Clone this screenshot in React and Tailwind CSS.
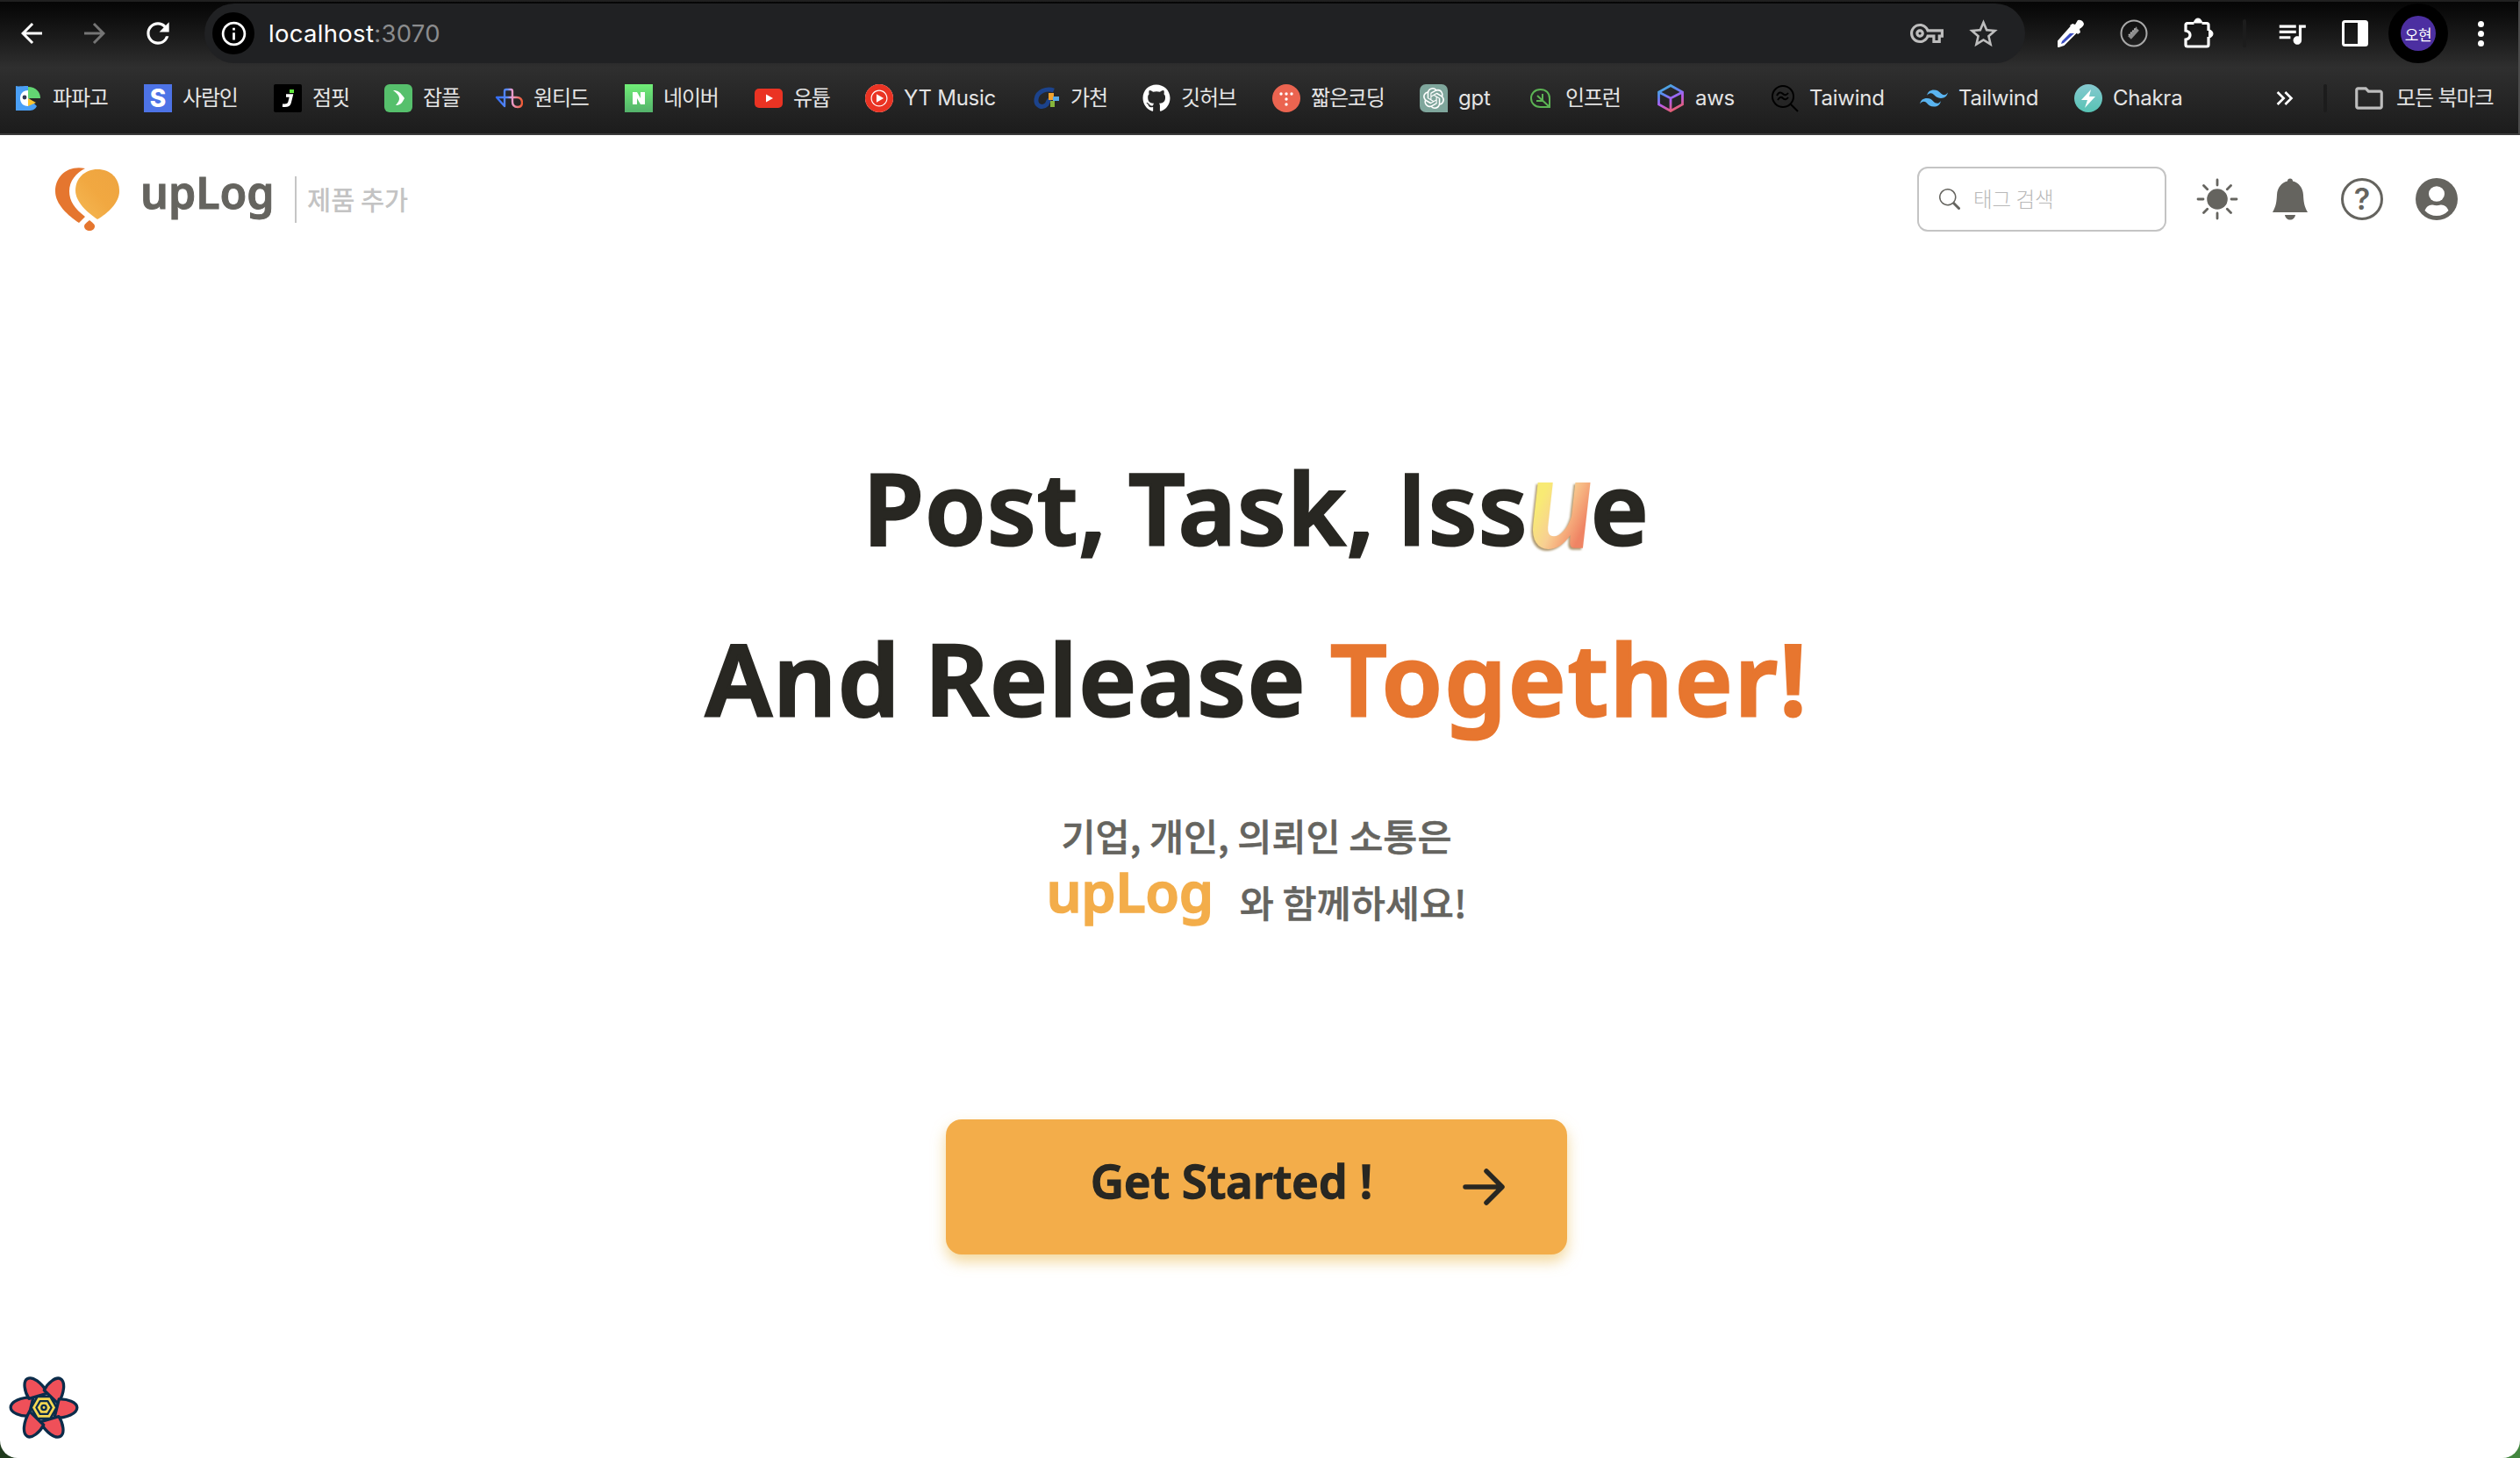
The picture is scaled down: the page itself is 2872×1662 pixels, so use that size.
import { FaGithub } from 'react-icons/fa';
import { SiOpenai, SiTailwindcss, SiYoutubemusic } from 'react-icons/si';
import { BsSearch } from 'react-icons/bs';
import {
  MdArrowBack,
  MdArrowForward,
  MdInfoOutline,
  MdKeyboardDoubleArrowRight,
  MdOutlineFolder,
  MdOutlineVpnKey,
  MdQueueMusic,
  MdRefresh,
  MdStarOutline,
} from 'react-icons/md';

function PapagoIcon() {
  return (
    <svg viewBox="0 0 32 32" className="size-8">
      <path d="M2 2c3 1 6 0 14 0v13l10 10c-2 4-5 5-9 5H2V10z" fill="#4a9ff5" />
      <path d="M16 3c9 0 14 6 14 13H16z" fill="#63d673" />
      <path d="M16 7c-6 0-9 4-9 9s3 9 9 9z" fill="#fff" />
      <path d="M16 16l9 5-9 4z" fill="#fbc531" />
      <circle cx="12" cy="15" r="2.4" fill="#303a52" />
    </svg>
  );
}

function SaraminIcon() {
  return (
    <span className="flex size-8 items-center justify-center bg-[#4d73e6] font-['Inter'] text-[28px] leading-none font-extrabold text-white">
      S
    </span>
  );
}

function JumpitIcon() {
  return (
    <svg viewBox="0 0 32 32" className="size-8">
      <rect width="32" height="32" rx="2" fill="#000" />
      <rect x="18" y="6" width="5" height="4" fill="#5fe63c" />
      <path d="M14 13h6l-2 8q-1 4-8 3" fill="none" stroke="#fff" strokeWidth="3.6" />
    </svg>
  );
}

function JobpleIcon() {
  return (
    <svg viewBox="0 0 32 32" className="size-8">
      <rect width="32" height="32" rx="6" fill="#56c06c" />
      <path d="M10 7c6 0 8 2 13 9-3 6-5 8-10 8 3-4 4-5 4-8s-3-6-7-9z" fill="#fff" />
    </svg>
  );
}

function WantedIcon() {
  return (
    <svg viewBox="0 0 32 32" className="size-8" fill="none" strokeWidth="2.4">
      <defs>
        <linearGradient id="wanted" x1="0" y1="0" x2="32" y2="0" gradientUnits="userSpaceOnUse">
          <stop offset="0" stopColor="#2c66f5" />
          <stop offset=".45" stopColor="#5b8cf7" />
          <stop offset=".6" stopColor="#e9a0d4" />
          <stop offset="1" stopColor="#f0562a" />
        </linearGradient>
      </defs>
      <path
        d="M11 15V8q0-2 2-2h5q2 0 2 2v12q0 6 6 6 5 0 5-5 0-6-6-6H2l9 10V15"
        stroke="url(#wanted)"
        strokeLinejoin="round"
      />
    </svg>
  );
}

function NaverIcon() {
  return (
    <svg viewBox="0 0 32 32" className="size-8">
      <defs>
        <linearGradient id="naver" x1="0" y1="0" x2="0" y2="1">
          <stop offset="0" stopColor="#70ee77" />
          <stop offset="1" stopColor="#54b26b" />
        </linearGradient>
      </defs>
      <rect width="32" height="32" fill="url(#naver)" />
      <path d="M9 9h5l4 7V9h5v14h-5l-4-7v7H9z" fill="#fff" />
    </svg>
  );
}

function YoutubeIcon() {
  return (
    <svg viewBox="0 0 32 32" className="size-8">
      <rect y="5" width="32" height="22" rx="5" fill="#ea3323" />
      <path d="M13 11.5v9l8-4.500z" fill="#fff" />
    </svg>
  );
}

function YtMusicIcon() {
  return (
    <span className="flex size-8 items-center justify-center rounded-full bg-white">
      <SiYoutubemusic className="size-8 text-[#ea3323]" />
    </span>
  );
}

function GachonIcon() {
  return (
    <svg viewBox="0 0 32 32" className="size-8">
      <path
        d="M25 7C17 4 6 8 5 17c-1 8 7 11 12 6l3-6"
        fill="none"
        stroke="#1c438c"
        strokeWidth="5"
      />
      <rect x="19" y="10" width="6" height="8" fill="#f0a32e" />
      <rect x="24" y="14" width="7" height="5" fill="#55a8e8" />
      <rect x="21" y="19" width="5" height="7" fill="#86b53c" />
    </svg>
  );
}

function ShortCodingIcon() {
  return (
    <svg viewBox="0 0 32 32" className="size-8" fill="#fff">
      <circle cx="16" cy="16" r="16" fill="#eb6450" />
      <circle cx="10" cy="11" r="1.700" />
      <circle cx="16" cy="11" r="1.700" />
      <circle cx="22" cy="11" r="1.700" />
      <circle cx="16" cy="17" r="1.700" />
      <circle cx="16" cy="23" r="1.700" />
    </svg>
  );
}

function GptIcon() {
  return (
    <span className="flex size-8 items-center justify-center rounded-[7px] rounded-br-none bg-[#7fa69c] text-white">
      <SiOpenai className="size-6" />
    </span>
  );
}

function InflearnIcon() {
  return (
    <svg viewBox="0 0 32 32" className="size-8" fill="none" stroke="#5cb354" strokeWidth="2">
      <path d="M15.500 6C22 6 26 10 26 16v10H15.500C9 26 5 21.500 5 16S9 6 15.500 6z" />
      <path d="M26 26L12 13M18 18v-7M18 19h-7" />
    </svg>
  );
}

function AwsIcon() {
  return (
    <svg viewBox="0 0 32 32" className="size-8" fill="none" strokeWidth="2.800">
      <defs>
        <linearGradient id="aws" x1="6" y1="0" x2="20" y2="32" gradientUnits="userSpaceOnUse">
          <stop offset="0" stopColor="#3fb8d4" />
          <stop offset=".35" stopColor="#5f86f2" />
          <stop offset=".6" stopColor="#b55cf0" />
          <stop offset="1" stopColor="#ef5f5c" />
        </linearGradient>
      </defs>
      <path
        d="M16 1.500L29.500 9v14L16 30.500 2.500 23V9zM2.500 9L16 16l13.500-7M16 16v14"
        stroke="url(#aws)"
      />
    </svg>
  );
}

function TaiwindSearchIcon() {
  return (
    <svg viewBox="0 0 32 32" className="size-8" fill="none" stroke="#000" strokeWidth="2">
      <circle cx="14" cy="14" r="12" />
      <path d="M22.500 22.500L31 31M7 13q3-6 7-2 3 3 6-1M8 18q3-5 6-2 3 3 6-1" />
    </svg>
  );
}

function ChakraIcon() {
  return (
    <svg viewBox="0 0 32 32" className="size-8">
      <defs>
        <linearGradient id="chakra" x1="0" y1="0" x2="0" y2="1">
          <stop offset="0" stopColor="#86c9d0" />
          <stop offset="1" stopColor="#57c3b4" />
        </linearGradient>
      </defs>
      <circle cx="16" cy="16" r="16" fill="url(#chakra)" />
      <path d="M19 6L8 18h7l-3 9 12-13h-7z" fill="#fff" />
    </svg>
  );
}

const BOOKMARKS = [
  { label: '파파고', Icon: PapagoIcon, slot: 'w-[148px]' },
  { label: '사람인', Icon: SaraminIcon, slot: 'w-[148px]' },
  { label: '점핏', Icon: JumpitIcon, slot: 'w-[126px]' },
  { label: '잡플', Icon: JobpleIcon, slot: 'w-[126px]' },
  { label: '원티드', Icon: WantedIcon, slot: 'w-[148px]' },
  { label: '네이버', Icon: NaverIcon, slot: 'w-[148px]' },
  { label: '유튭', Icon: YoutubeIcon, slot: 'w-[126px]' },
  { label: 'YT Music', Icon: YtMusicIcon, slot: 'w-[190px]', latin: true },
  { label: '가천', Icon: GachonIcon, slot: 'w-[126px]' },
  { label: '깃허브', Icon: () => <FaGithub className="size-8 text-white" />, slot: 'w-[148px]' },
  { label: '짧은코딩', Icon: ShortCodingIcon, slot: 'w-[168px]' },
  { label: 'gpt', Icon: GptIcon, slot: 'w-[122px]', latin: true },
  { label: '인프런', Icon: InflearnIcon, slot: 'w-[148px]' },
  { label: 'aws', Icon: AwsIcon, slot: 'w-[130px]', latin: true },
  { label: 'Taiwind', Icon: TaiwindSearchIcon, slot: 'w-[170px]', latin: true },
  {
    label: 'Tailwind',
    Icon: () => <SiTailwindcss className="size-8 text-[#5ab4f0]" />,
    slot: 'w-[176px]',
    latin: true,
  },
  { label: 'Chakra', Icon: ChakraIcon, slot: 'w-[140px]', latin: true },
];

function EyedropperIcon() {
  return (
    <svg viewBox="0 0 32 32" className="size-8">
      <path d="M2 25L17 8l6 6L8 29l-6 2z" fill="#fff" stroke="#fff" strokeWidth="2" strokeLinejoin="round" />
      <path d="M6 25l9-9h5L8 27l-3 1z" fill="#3a4cc0" />
      <path d="M15 7l3-2 3 1 3-5q5-1 7 4 0 3-5 6l1 4-3 2z" fill="#fff" />
    </svg>
  );
}

function PencilBadgeIcon() {
  return (
    <svg viewBox="0 0 32 32" className="size-8" fill="none">
      <circle cx="16" cy="16" r="14.500" stroke="#a9a9a9" strokeWidth="2" />
      <path d="M11 21l9-10" stroke="#8d8d8d" strokeWidth="5" />
      <path d="M10 18l9-9" stroke="#bdbdbd" strokeWidth="1.500" strokeDasharray="1.500 1.500" />
    </svg>
  );
}

function PuzzleIcon() {
  return (
    <svg viewBox="0 0 36 36" className="size-9">
      <path
        d="M5 6.500h8.500M22.500 6.500H28q2 0 2 2V15M30 22v9q0 2-2 2H6q-2 0-2-2v-6q5-1 5-5t-5-5V8.500q0-2 2-2"
        fill="none"
        stroke="#fff"
        strokeWidth="3.200"
      />
      <path d="M13.500 6a4.500 5 0 0 1 9 0zM30.500 14a4.500 4.500 0 0 1 0 9z" fill="#fff" stroke="#fff" />
    </svg>
  );
}

function SidePanelIcon() {
  return (
    <svg viewBox="0 0 30 30" className="size-[30px]">
      <rect x="1.500" y="1.500" width="27" height="27" rx="2" fill="none" stroke="#fff" strokeWidth="3" />
      <rect x="18" y="1" width="11" height="28" fill="#fff" />
    </svg>
  );
}

function Toolbar() {
  return (
    <div className="flex h-[68px] items-center text-white">
      <div className="flex w-[72px] justify-center">
        <MdArrowBack className="size-[36px]" />
      </div>
      <div className="flex w-[72px] justify-center text-[#757575]">
        <MdArrowForward className="size-[36px]" />
      </div>
      <div className="flex w-[72px] justify-center">
        <MdRefresh className="size-[38px]" />
      </div>

      {/* Address bar */}
      <div className="ml-[17px] flex h-full w-[2075px] items-center rounded-full bg-[#202123] pr-4 pl-[9px]">
        <div className="flex size-12 items-center justify-center rounded-full bg-black">
          <MdInfoOutline className="size-[33px]" />
        </div>
        <p className="ml-4 pt-px font-['Inter'] text-[27.500px] tracking-[0.3px]">
          localhost<span className="text-[#8b8c8e]">:3070</span>
        </p>
        <div className="ml-auto flex w-16 justify-center text-[#bdbdbd]">
          <MdOutlineVpnKey className="size-[38px]" />
        </div>
        <div className="flex w-16 justify-center text-[#bdbdbd]">
          <MdStarOutline className="size-[39px]" />
        </div>
      </div>

      {/* Extensions */}
      <div className="ml-4 flex w-[72px] justify-center">
        <EyedropperIcon />
      </div>
      <div className="flex w-[72px] justify-center">
        <PencilBadgeIcon />
      </div>
      <div className="flex w-[72px] justify-center pl-0.5">
        <PuzzleIcon />
      </div>
      <div className="mx-4 h-8 w-1 rounded-full bg-[#1c1c1c]" />
      <div className="flex w-[72px] justify-center">
        <MdQueueMusic className="size-[38px]" />
      </div>
      <div className="flex w-[72px] justify-center">
        <SidePanelIcon />
      </div>
      <div className="ml-0.5 flex size-[68px] items-center justify-center rounded-full bg-black">
        <div className="flex size-10 items-center justify-center rounded-full bg-[#4c2fa1] font-['Noto_Sans_CJK_KR',sans-serif] text-[17px] leading-none tracking-[-0.5px]">
          오현
        </div>
      </div>
      <div className="ml-[34px] flex flex-col gap-1">
        <span className="size-[7px] rounded-full bg-white" />
        <span className="size-[7px] rounded-full bg-white" />
        <span className="size-[7px] rounded-full bg-white" />
      </div>
    </div>
  );
}

function BookmarkBar() {
  return (
    <div className="flex h-20 items-center pl-4 font-['Inter','Noto_Sans_CJK_KR',sans-serif] text-[24px] text-[#e4e4e4]">
      {BOOKMARKS.map(({ label, Icon, slot, latin }) => (
        <div key={label} className={`flex shrink-0 items-center gap-3 ${slot}`}>
          <Icon />
          <span className={`whitespace-nowrap ${latin ? 'tracking-[-0.25px]' : 'tracking-[-1.2px]'}`}>
            {label}
          </span>
        </div>
      ))}
      <MdKeyboardDoubleArrowRight className="ml-[84px] size-8 text-white" />
      <div className="ml-7 h-8 w-1 rounded-full bg-[#1c1c1c]" />
      <MdOutlineFolder className="ml-[29px] size-[38px] text-[#bdbdbd]" />
      <span className="ml-3 tracking-[-1.1px] whitespace-nowrap">모든 북마크</span>
    </div>
  );
}

function BalloonLogo() {
  return (
    <svg viewBox="0 0 74 72" className="h-[72px] w-[74px]">
      <defs>
        <linearGradient id="balloon" x1="0" y1="1" x2="1" y2="0">
          <stop offset="0" stopColor="#f5b955" />
          <stop offset=".5" stopColor="#f1a841" />
          <stop offset="1" stopColor="#eea440" />
        </linearGradient>
      </defs>
      <path d="M34 1C14-3 0 10 0 27c0 15 15 28 27 36l7-7C22 47 16 38 16 27 16 15 24 6 34 1z" fill="#e5762f" />
      <path d="M48 2c15 0 25 10 25 25 0 13-13 25-25 32-12-8-25-20-25-33C23 12 34 2 48 2z" fill="url(#balloon)" />
      <path d="M39 60c4 3 6 5 6 7 0 3-3 5-6 5s-6-2-6-5c0-2 2-4 6-7z" fill="#e5762f" />
    </svg>
  );
}

function SunIcon() {
  return (
    <svg viewBox="0 0 48 48" className="size-12" fill="#65645f" stroke="#65645f" strokeWidth="2.800" strokeLinecap="round">
      <circle cx="24" cy="24" r="11.800" stroke="none" />
      <path d="M24 2v6M24 40v6M2 24h6M40 24h6M8.500 8.500l4.200 4.200M35.300 35.300l4.200 4.200M39.500 8.500l-4.200 4.200M12.700 35.300l-4.200 4.200" />
    </svg>
  );
}

function BellIcon() {
  return (
    <svg viewBox="0 0 42 48" className="h-12 w-[42px]" fill="#65645f">
      <path d="M21 .500c1.800 0 3 1.300 3 3 7 1.800 11.500 7.500 12 15.500.4 8 1 13 5 20H1c4-7 4.600-12 5-20C6.500 11 11 5.300 18 3.500c0-1.700 1.200-3 3-3z" />
      <path d="M15 42h12c-.5 3.500-3 5.500-6 5.500s-5.500-2-6-5.500z" />
    </svg>
  );
}

function HelpIcon() {
  return (
    <span className="flex size-12 items-center justify-center rounded-full border-[3px] border-[#65645f] pb-px font-['Inter',sans-serif] text-[34px] leading-none font-semibold text-[#65645f]">
      ?
    </span>
  );
}

function UserIcon() {
  return (
    <svg viewBox="0 0 48 48" className="size-12">
      <circle cx="24" cy="24" r="24" fill="#65645f" />
      <ellipse cx="24" cy="18" rx="9" ry="8.700" fill="#fff" />
      <path d="M10.500 37q2.500-7 9-6.500 4.500 1.500 9 0 6.500-.5 9 6.500-5.500 6-13.500 6t-13.500-6z" fill="#fff" />
    </svg>
  );
}

function Header() {
  return (
    <header className="flex h-[146px] items-center pl-[63px]">
      <BalloonLogo />
      <span className="mb-4 ml-[23px] w-[152px] font-['Noto_Sans',sans-serif] text-[50px] leading-none font-semibold text-[#65645f] [-webkit-text-stroke:1px_#65645f]">
        upLog
      </span>
      <div className="ml-6 h-[53px] w-0.5 bg-[#c5c5c5]" />
      <span className="ml-3 font-['Noto_Sans_CJK_KR',sans-serif] text-[29.500px] leading-none font-medium text-[#c3c3c3]">
        제품 추가
      </span>

      <div className="ml-auto flex h-[74px] w-[284px] items-center rounded-xl border-2 border-[#c4c4c4] pl-[23px]">
        <BsSearch className="size-6 text-[#65645f]" />
        <span className="ml-[15px] font-['Noto_Sans_CJK_KR',sans-serif] text-[23.500px] leading-none font-light text-[#b8b8b8]">
          태그 검색
        </span>
      </div>
      <div className="mr-[71px] flex items-center pl-[34px]">
        <SunIcon />
        <span className="ml-[38px]">
          <BellIcon />
        </span>
        <span className="ml-[37px]">
          <HelpIcon />
        </span>
        <span className="ml-[37px]">
          <UserIcon />
        </span>
      </div>
    </header>
  );
}

function Hero() {
  return (
    <main className="flex flex-col items-center pt-[180px] pr-2 text-[#282722]">
      <h1 className="text-center font-['Noto_Sans',sans-serif] text-[112px] leading-[195px] font-semibold tracking-[2px] whitespace-nowrap [word-spacing:-4px] [-webkit-text-stroke:3px_currentColor]">
        <div className="tracking-[1.800px] [word-spacing:-7px]">
          Post, Task, <span className="font-['Open_Sans',sans-serif]">I</span>ss
          <span className="mr-[-4px] inline-block w-[75px] origin-bottom-left translate-y-1 scale-x-95 bg-linear-to-br from-[#f8ea74] from-35% via-[#f8cf92] via-55% to-[#ef8464] to-80% bg-clip-text pr-3 font-['Lato',sans-serif] text-[146px] leading-[150px] font-bold tracking-normal text-transparent italic drop-shadow-[-2px_2px_1px_rgba(120,85,20,0.6)] [-webkit-text-stroke:0px]">
            u
          </span>
          e
        </div>
        <div className="pl-0.5">
          And Release <span className="tracking-[2.500px] text-[#e7762f]">Together!</span>
        </div>
      </h1>

      <div className="mt-[44px] flex flex-col items-center font-['Noto_Sans_CJK_KR',sans-serif] text-[42.500px] leading-[76px] font-medium text-[#65645f] [-webkit-text-stroke:0.600px_#65645f]">
        <p>기업, 개인, 의뢰인 소통은</p>
        <p className="flex">
          <span className="mr-[30px] h-[76px] font-['Noto_Sans',sans-serif] text-[63px] leading-[51px] font-semibold tracking-[-0.4px] text-[#f3ad4a] [-webkit-text-stroke:1.500px_#f3ad4a]">
            upLog
          </span>
          와 함께하세요!
        </p>
      </div>

      <button className="mt-[210px] flex h-[154px] w-[708px] items-center rounded-[18px] bg-[#f3ad4a] pl-[165px] shadow-[0_8px_16px_rgba(235,190,90,0.6)]">
        <span className="w-[424px] pb-3.5 text-left font-['Noto_Sans',sans-serif] text-[52px] leading-none font-semibold tracking-[0.3px] whitespace-nowrap [-webkit-text-stroke:1.500px_#282722]">
          Get Started !
        </span>
        <svg viewBox="0 0 48 42" className="h-[42px] w-12" fill="none" stroke="#282722" strokeWidth="5.500" strokeLinecap="round" strokeLinejoin="round">
          <path d="M3 21h41M27 3l18 18-18 18" />
        </svg>
      </button>
    </main>
  );
}

const PETAL_ANGLES = [0, 60, 120, 180, 240, 300];

function QueryDevtoolsFlower() {
  return (
    <svg viewBox="-120 -110 240 220" className="h-[73px] w-20" stroke="#0b2c4a" strokeWidth="10" strokeLinejoin="round">
      {PETAL_ANGLES.map((angle) => (
        <path
          key={angle}
          d="M-36-36C-80-36-114-20-114 0c0 18 34 31 62 29z"
          fill="#ef5059"
          transform={`rotate(${angle})`}
        />
      ))}
      <path d="M-44 0l22-38h44L44 0 22 38h-44z" fill="#f6d852" strokeWidth="8" />
      <path d="M-26 0l13-22h26L26 0 13 22h-26z" fill="#f6d852" strokeWidth="7" />
      <circle r="8" fill="#f6d852" strokeWidth="7" />
    </svg>
  );
}

export default function App() {
  return (
    <div className="h-[1662px] w-[2872px] overflow-hidden bg-linear-to-r from-[#1f3a1c] to-[#43873f]">
      <div className="flex h-full flex-col overflow-hidden rounded-b-[20px] bg-white">
        <div className="h-[154px] shrink-0 border-t-2 border-r-2 border-b-2 border-t-[#202020] border-r-[#4a4a4a] border-b-[#3a3a3a] bg-linear-to-b from-[#060606] via-[#2f2f2f] to-[#1c1c1c] pt-0.5">
          <Toolbar />
          <BookmarkBar />
        </div>
        <Header />
        <Hero />
        <div className="mt-auto pb-[21px] pl-2.5">
          <QueryDevtoolsFlower />
        </div>
      </div>
    </div>
  );
}
